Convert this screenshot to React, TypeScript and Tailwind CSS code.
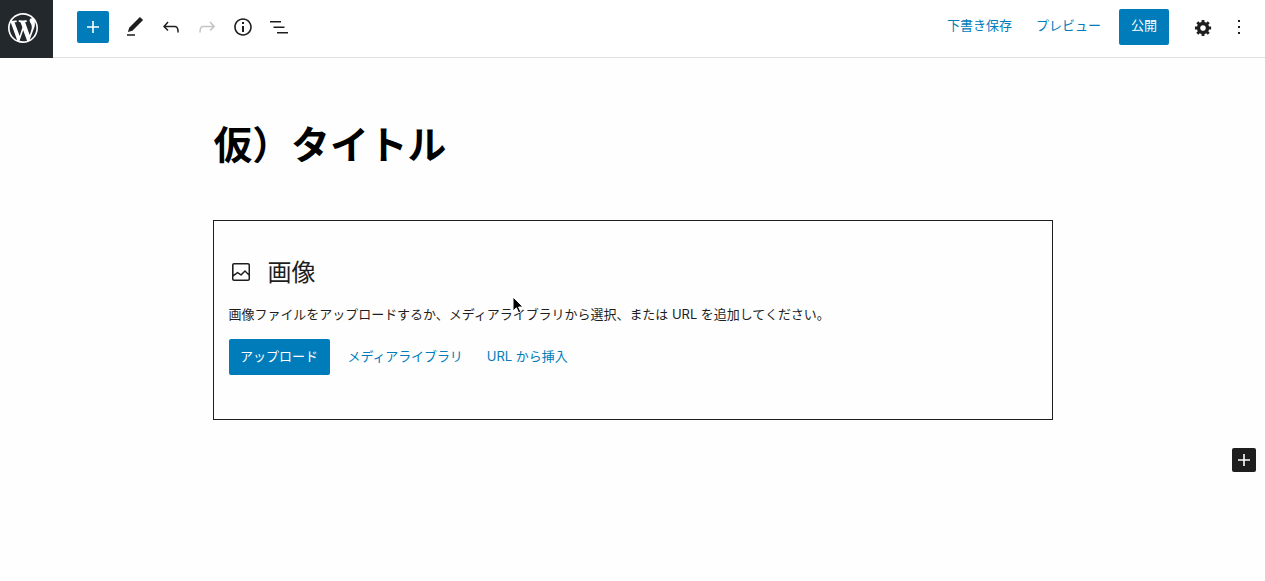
const JP = "font-['Inter','Noto_Sans_CJK_JP',sans-serif]";

function Icon({ d, size = 24, box = 24, className = "" }: { d: string; size?: number; box?: number; className?: string }) {
  return (
    <svg width={size} height={size} viewBox={`0 0 ${box} ${box}`} fill="currentColor" className={className}>
      <path d={d} />
    </svg>
  );
}

const WP = "M20 10c0-5.51-4.49-10-10-10C4.48 0 0 4.49 0 10c0 5.52 4.48 10 10 10 5.51 0 10-4.48 10-10zM7.78 15.37L4.37 6.22c.55-.02 1.17-.08 1.17-.08.5-.06.44-1.13-.06-1.11 0 0-1.45.11-2.37.11-.18 0-.37 0-.58-.01C4.12 2.69 6.87 1.11 10 1.11c2.33 0 4.45.87 6.05 2.34-.68-.11-1.65.39-1.65 1.58 0 .74.45 1.36.9 2.1.35.61.55 1.36.55 2.46 0 1.49-1.4 5-1.4 5l-3.03-8.37c.54-.02.82-.17.82-.17.5-.05.44-1.25-.06-1.22 0 0-1.44.12-2.38.12-.87 0-2.33-.12-2.33-.12-.5-.03-.56 1.2-.06 1.22l.92.08 1.26 3.41zM17.41 10c.24-.64.74-1.87.43-4.25.7 1.29 1.05 2.71 1.05 4.25 0 3.29-1.73 6.24-4.4 7.78.97-2.59 1.94-5.2 2.92-7.78zM6.1 18.09C3.12 16.65 1.11 13.53 1.11 10c0-1.3.23-2.48.72-3.59C3.25 10.3 4.67 14.2 6.1 18.09zm4.03-6.63l2.58 6.98c-.86.29-1.76.45-2.71.45-.79 0-1.57-.11-2.29-.33.81-2.38 1.62-4.74 2.42-7.1z";
const PLUS = "M18 11.2h-5.2V6h-1.6v5.2H6v1.6h5.2V18h1.6v-5.2H18z";
const EDIT = "M20.1 5.1L16.9 2 6.2 12.7l-1.3 4.4 4.5-1.3L20.1 5.1zM4 20.8h8v-1.5H4v1.5z";
const UNDO = "M18.3 11.7c-.6-.6-1.4-.9-2.3-.9H6.7l2.9-3.3-1.1-1-4.5 5L8.5 16l1-1-2.7-2.7H16c.5 0 .9.2 1.3.5 1 1 1 3.4 1 4.5v.3h1.5v-.2c0-1.5 0-4.3-1.5-5.7z";
const REDO = "M15.6 6.5l-1.1 1 2.9 3.3H8c-.9 0-1.7.3-2.3.9-1.4 1.5-1.4 4.2-1.4 5.6v.2h1.5v-.3c0-1.1 0-3.5 1-4.5.3-.3.7-.5 1.3-.5h9.2L14.5 15l1.1 1.1 4.6-4.6-4.6-5z";
const INFO = "M12 3.2c-4.8 0-8.8 3.9-8.8 8.8 0 4.8 3.9 8.8 8.8 8.8 4.8 0 8.8-3.9 8.8-8.8 0-4.8-4-8.8-8.8-8.8zm0 16c-4 0-7.2-3.3-7.2-7.2C4.8 8 8 4.8 12 4.8s7.2 3.3 7.2 7.2c0 4-3.2 7.2-7.2 7.2zM11 17h2v-6h-2v6zm0-8h2V7h-2v2z";
const LIST = "M3 6h11v1.5H3V6zm3.5 5.5h11V13h-11v-1.5zM21 17H10v1.5h11V17z";
const COG = "M18 12h-2.18c-.17.7-.44 1.35-.81 1.93l1.54 1.54-2.1 2.1-1.54-1.54c-.58.36-1.23.63-1.91.79V19H8v-2.18c-.68-.16-1.33-.43-1.91-.79l-1.54 1.54-2.12-2.12 1.54-1.54c-.36-.58-.63-1.23-.79-1.91H1V9.03h2.17c.16-.7.44-1.35.8-1.94L2.43 5.55l2.1-2.1 1.54 1.54c.58-.37 1.24-.64 1.93-.81V2h3v2.18c.68.16 1.33.43 1.91.79l1.54-1.54 2.12 2.12-1.54 1.54c.36.59.64 1.24.8 1.94H18V12zm-8.5 1.5c1.66 0 3-1.34 3-3s-1.34-3-3-3-3 1.34-3 3 1.34 3 3 3z";
const MORE = "M13 19h-2v-2h2v2zm0-6h-2v-2h2v2zm0-6h-2V5h2v2z";
const IMAGE = "M19 3H5c-1.105 0-2 .895-2 2v14c0 1.105.895 2 2 2h14c1.105 0 2-.895 2-2V5c0-1.105-.895-2-2-2zM5 4.5h14c.276 0 .5.224.5.5v8.4l-3-2.9c-.3-.3-.8-.3-1 0L11.9 14 9 12c-.3-.2-.6-.2-.8 0l-3.6 2.6V5c-.1-.3.1-.5.4-.5zm14 15H5c-.3 0-.5-.2-.5-.5v-2.4l4.1-3 3 1.9c.3.2.7.2.9-.1L16 12l3.5 3.4V19c0 .3-.2.5-.5.5z";

export default function App() {
  return (
    <div className={`relative h-[581px] w-full overflow-hidden bg-[#fefefe] text-[#1e1e1e] ${JP}`}>
      <header className="flex h-[58px] items-center border-b border-[#e0e0e0] bg-white pb-[3px]">
        <div className="flex h-[58px] w-[53px] self-start items-center justify-center bg-[#23282d] pb-[2px] pr-[7px] text-white">
          <Icon d={WP} size={30} box={20} />
        </div>
        <div className="ml-6 flex h-8 w-8 items-center justify-center rounded-[2px] bg-[#007cba] text-white">
          <Icon d={PLUS} />
        </div>
        <div className="ml-[14px] flex items-center gap-3 text-[#1e1e1e]">
          <Icon d={EDIT} />
          <Icon d={UNDO} />
          <Icon d={REDO} className="text-[#c4c4c4]" />
          <Icon d={INFO} />
          <Icon d={LIST} />
        </div>
        <div className="ml-auto flex items-center text-[13px] text-[#007cba]">
          <span className="pb-[2px]">下書き保存</span>
          <span className="ml-6 pb-[2px]">プレビュー</span>
          <span className="ml-[18px] flex h-9 w-[50px] items-center justify-center rounded-[2px] bg-[#007cba] pb-[2px] text-white">公開</span>
          <Icon d={COG} size={19} box={20} className="ml-[25px] text-[#1e1e1e]" />
          <Icon d={MORE} className="ml-[14px] text-[#1e1e1e]" />
          <div className="w-[14px]" />
        </div>
      </header>

      <main className="mx-auto w-[840px]">
        <h1 className="pl-px pt-[58px] text-[38.8px] font-bold leading-[58px] text-black">仮）タイトル</h1>
        <section className="mt-[46px] h-[200px] border border-[#1e1e1e] px-[15px] pt-[35px]">
          <div className="flex h-8 items-center gap-[15px] text-[24px] leading-8">
            <Icon d={IMAGE} />
            <span className="pt-[2px]">画像</span>
          </div>
          <p className="mt-[17px] text-[13px] leading-[18px] tracking-[-0.03px]">画像ファイルをアップロードするか、メディアライブラリから選択、または URL を追加してください。</p>
          <div className="mt-4 flex items-center text-[13px] text-[#007cba]">
            <span className="flex h-9 w-[101px] items-center justify-center rounded-[2px] bg-[#007cba] text-white">アップロード</span>
            <span className="ml-[18px] tracking-[-0.1px]">メディアライブラリ</span>
            <span className="ml-6">URL から挿入</span>
          </div>
        </section>
      </main>

      <div className="absolute left-[1232px] top-[448px] flex h-6 w-6 items-center justify-center rounded-[2px] bg-[#1e1e1e] text-white">
        <Icon d={PLUS} />
      </div>

      <svg className="absolute left-[512px] top-[296px]" width="12" height="18" viewBox="0 0 12 18">
        <path d="M1 1v14l3.4-3.2 2.2 5 2.2-1-2.2-4.8H11z" fill="#000" stroke="#fff" strokeWidth="1" />
      </svg>
    </div>
  );
}
